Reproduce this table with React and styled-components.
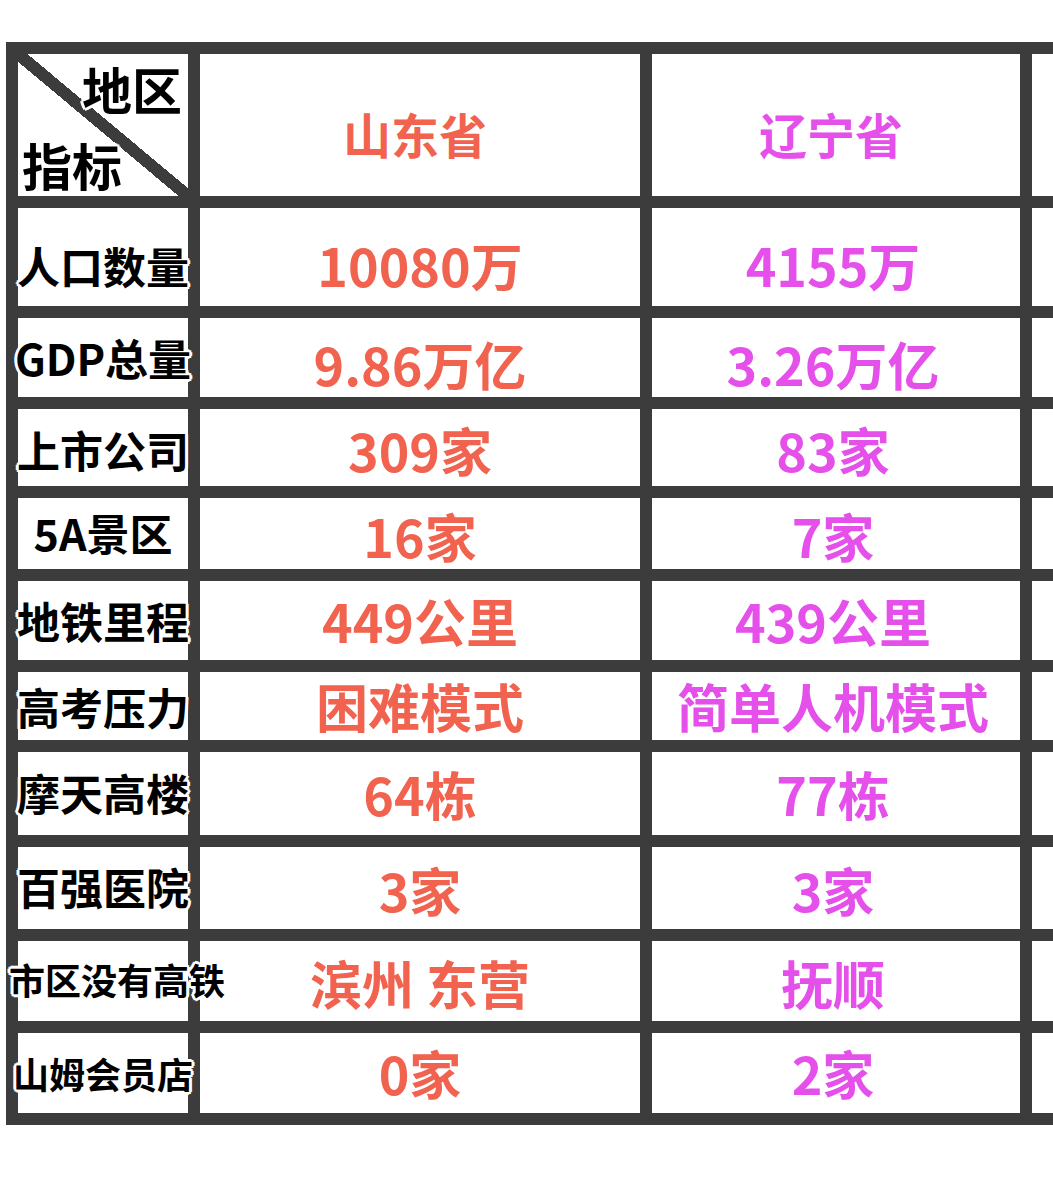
import styled, { createGlobalStyle } from 'styled-components';

const GlobalStyle = createGlobalStyle`
  html, body {
    margin: 0;
    background: #ffffff;
  }
  body {
    font-family: "Noto Sans CJK SC", "Noto Sans", sans-serif;
  }
`;

const LINE = '#3c3c3c';

const Page = styled.div`
  width: 1053px;
  height: 1192px;
  overflow: hidden;
  padding: 42px 0 0 6px;
  box-sizing: border-box;
`;

const Table = styled.div`
  display: grid;
  grid-template-columns: 170px 440px 368px 21px;
  grid-template-rows: 142px 98px 79px 77px 71px 79px 68px 83px 82px 80px 80px;
  gap: 12px;
  padding: 12px 0 12px 12px;
  background: ${LINE};
  width: max-content;
`;

const Cell = styled.div`
  background: #ffffff;
  display: flex;
  align-items: center;
  justify-content: center;
  position: relative;
  overflow: visible;
  white-space: nowrap;
`;

const CornerCell = styled(Cell)`
  background: linear-gradient(
    to top right,
    #ffffff calc(50% - 6px),
    ${LINE} calc(50% - 6px),
    ${LINE} calc(50% + 6px),
    #ffffff calc(50% + 6px)
  );
  display: block;
`;

const halo = `
  -3px 0 #fff, 3px 0 #fff, 0 -3px #fff, 0 3px #fff,
  -2px -2px #fff, 2px 2px #fff, -2px 2px #fff, 2px -2px #fff
`;

const CornerText = styled.span`
  position: absolute;
  font-size: 50px;
  font-weight: 700;
  line-height: 1;
  color: #000;
  text-shadow: ${halo};
  top: ${(p) => (p.$top ? '9px' : 'auto')};
  bottom: ${(p) => (p.$top ? 'auto' : '7px')};
  left: ${(p) => (p.$top ? '64px' : '4px')};
`;

const Label = styled.span`
  font-size: ${(p) => (p.$small ? '36px' : '43px')};
  font-weight: 700;
  line-height: 1;
  color: #000;
  text-shadow: ${halo};
  position: relative;
  z-index: 2;
  margin-top: ${(p) => p.$shift || 0}px;
  margin-left: ${(p) => p.$dx || 0}px;
`;

const Value = styled.span`
  font-size: ${(p) => (p.$head ? '48px' : '52px')};
  font-weight: 700;
  line-height: 1;
  color: ${(p) => (p.$tone === 'sd' ? '#f1624f' : '#e54fea')};
  margin-top: ${(p) => p.$shift || 0}px;
  margin-left: ${(p) => p.$dx || 0}px;
`;

const rows = [
  { label: '人口数量', sd: '10080万', ln: '4155万', shift: 16, vshift: 16 },
  { label: 'GDP总量', sd: '9.86万亿', ln: '3.26万亿', shift: 0, vshift: 12 },
  { label: '上市公司', sd: '309家', ln: '83家', shift: 4, vshift: 4 },
  { label: '5A景区', sd: '16家', ln: '7家', shift: -2, vshift: 4 },
  { label: '地铁里程', sd: '449公里', ln: '439公里', shift: 0, vshift: 0 },
  { label: '高考压力', sd: '困难模式', ln: '简单人机模式', shift: 0, vshift: 0 },
  { label: '摩天高楼', sd: '64栋', ln: '77栋', shift: -2, vshift: 0 },
  { label: '百强医院', sd: '3家', ln: '3家', shift: -4, vshift: 4 },
  { label: '市区没有高铁', sd: '滨州 东营', ln: '抚顺', shift: -4, vshift: 4, small: true, dx: 28 },
  { label: '山姆会员店', sd: '0家', ln: '2家', shift: 0, vshift: 0, small: true, dx: 0 },
];

export default function App() {
  return (
    <Page>
      <GlobalStyle />
      <Table>
        <CornerCell>
          <CornerText $top>地区</CornerText>
          <CornerText>指标</CornerText>
        </CornerCell>
        <Cell>
          <Value $head $tone="sd" $shift={16} $dx={-10}>山东省</Value>
        </Cell>
        <Cell>
          <Value $head $tone="ln" $shift={16} $dx={-10}>辽宁省</Value>
        </Cell>
        <Cell />
        {rows.map((r) => (
          <>
            <Cell key={r.label + '-l'}>
              <Label $small={r.small} $shift={r.shift} $dx={r.dx}>{r.label}</Label>
            </Cell>
            <Cell key={r.label + '-s'}>
              <Value $tone="sd" $shift={r.vshift}>{r.sd}</Value>
            </Cell>
            <Cell key={r.label + '-n'}>
              <Value $tone="ln" $shift={r.vshift} $dx={-6}>{r.ln}</Value>
            </Cell>
            <Cell key={r.label + '-x'} />
          </>
        ))}
      </Table>
    </Page>
  );
}
